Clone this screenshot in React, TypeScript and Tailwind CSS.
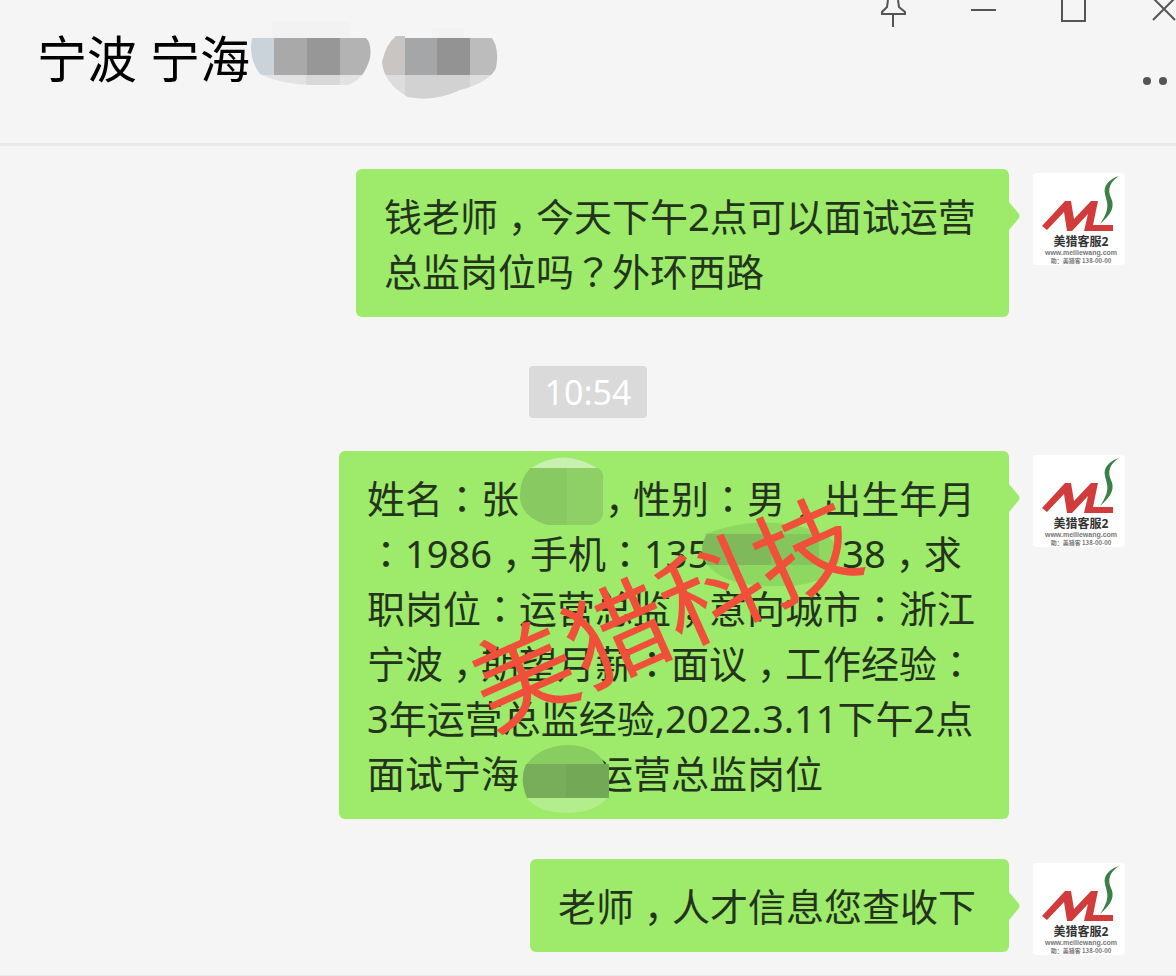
import { ReactNode } from "react";

// Full-width commas, colons and question marks sit in the middle of their cell.
function Line({ text }: { text: string }) {
    return (
        <>
            {text.split(/([，：？])/).map((part, i) => {
                if (part === "，") {
                    return (
                        <span key={i} className="pr-[9px] pl-[10px] [font-feature-settings:'halt']">
                            {part}
                        </span>
                    );
                }
                if (part === "：" || part === "？") {
                    return (
                        <span key={i} className="font-['Noto_Sans_CJK_JP',sans-serif] leading-none">
                            {part}
                        </span>
                    );
                }
                return part;
            })}
        </>
    );
}

function AvatarLogo() {
    return (
        <svg
            viewBox="0 0 92 92"
            role="img"
            aria-label="美猎客服2"
            className="mt-1 size-[92px] shrink-0 rounded-sm bg-white"
        >
            <path d="M9 53 L32 28 H38 L41 46 L58 28 H65 L60 52 H80 V58 H51 L55 41 L39 58 H34 L31 39 L14 57Z" fill="#d23b3b" />
            <path
                d="M86 3 C76 6 70 13 72 21 C74 30 78 35 67 51 C79 41 82 33 78 25 C74 16 77 9 86 3Z"
                fill="#3c8048"
            />
            <text
                x="48"
                y="73"
                textAnchor="middle"
                fontSize="12"
                fontWeight="700"
                fill="#333"
                fontFamily="Noto Sans, Noto Sans CJK SC, sans-serif"
            >
                美猎客服2
            </text>
            <text x="48" y="82" textAnchor="middle" fontSize="7" fontWeight="700" fill="#777" fontFamily="Liberation Sans, sans-serif">
                www.meiliewang.com
            </text>
            <text x="48" y="90" textAnchor="middle" fontSize="6" fontWeight="700" fill="#777" fontFamily="Noto Sans CJK SC, sans-serif">
                助：美猎客 138-00-00
            </text>
        </svg>
    );
}

function Message({ className, children }: { className: string; children: ReactNode }) {
    return (
        <article className="flex items-start justify-end gap-6 pr-[51px]">
            <div
                className={`relative rounded-md bg-[#9eea6a] pt-5 pr-4 pb-[18px] pl-7 text-[38px] leading-[55px] whitespace-nowrap text-[#24341c] [&>p]:h-[55px] ${className}`}
            >
                {children}
                <svg viewBox="0 0 12 30" className="absolute top-8 left-full h-[30px] w-3" aria-hidden="true">
                    <path d="M0 0 V1 L10 13 Q11 15 10 17 L0 29Z" fill="#9eea6a" />
                </svg>
            </div>
            <AvatarLogo />
        </article>
    );
}

function HeaderMosaic() {
    return (
        <svg viewBox="0 0 250 90" className="h-[90px] w-[250px]" aria-hidden="true">
            <defs>
                <clipPath id="blob-a">
                    <path d="M2 26 H116 Q122 32 120 46 Q114 68 98 73 H60 Q30 72 10 62 Q-2 46 2 26Z" />
                </clipPath>
                <clipPath id="blob-b">
                    <path d="M146 24 H240 Q250 34 246 56 Q240 70 210 78 Q184 90 158 85 Q134 72 132 50 Q136 32 146 24Z" />
                </clipPath>
            </defs>
            <path d="M22 10 H100 V26 H22Z M182 16 H214 V26 H182Z" fill="#f2f2f2" />
            <g clipPath="url(#blob-a)">
                <path d="M0 63 H125 V90 H0Z" fill="#e2e2e2" />
                <path d="M56 63 H90 V90 H56Z" fill="#d8d8d8" />
                <path d="M0 26 H24 V63 H0Z" fill="#cbd3da" />
                <path d="M24 26 H57 V63 H24Z" fill="#a9a9a9" />
                <path d="M57 26 H90 V63 H57Z" fill="#979797" />
                <path d="M90 26 H125 V63 H90Z" fill="#b3b3b3" />
            </g>
            <g clipPath="url(#blob-b)">
                <path d="M125 63 H250 V92 H125Z" fill="#dddddd" />
                <path d="M155 63 H220 V92 H155Z" fill="#d2d2d2" />
                <path d="M125 20 H155 V63 H125Z" fill="#c9c5c3" />
                <path d="M155 26 H187 V63 H155Z" fill="#a4a6a8" />
                <path d="M187 26 H220 V63 H187Z" fill="#939393" />
                <path d="M220 26 H250 V63 H220Z" fill="#bcbcbc" />
            </g>
        </svg>
    );
}

export default function App() {
    return (
        <div className="min-h-screen overflow-x-hidden bg-[#f5f5f5] font-['Noto_Sans','Noto_Sans_CJK_SC',sans-serif]">
            <header className="flex h-[146px] justify-between overflow-hidden border-b-3 border-[#e9e9e9]">
                <div className="flex items-start pl-[37px]">
                    <h1 className="pt-6 text-[50px] leading-[70px] whitespace-nowrap text-black">宁波 宁海</h1>
                    <div className="pt-3">
                        <HeaderMosaic />
                    </div>
                </div>

                <div className="flex shrink-0 flex-col items-end text-[#555]">
                    <div className="-mr-px flex gap-[62px]">
                        <button aria-label="置顶" className="h-7 w-7">
                            <svg viewBox="0 0 28 28" fill="none" stroke="currentColor" strokeWidth="2">
                                <path d="M9 0 L8 7 L3 12 V14 H26 V12 L20 7 L19 0 M14 14 V27" />
                            </svg>
                        </button>
                        <button aria-label="最小化" className="h-7 w-7">
                            <svg viewBox="0 0 28 28" fill="none" stroke="currentColor" strokeWidth="2">
                                <path d="M2 10 H27" />
                            </svg>
                        </button>
                        <button aria-label="最大化" className="h-7 w-7">
                            <svg viewBox="0 0 28 28" fill="none" stroke="currentColor" strokeWidth="2">
                                <path d="M3 -4 V21 H26 V-4" />
                            </svg>
                        </button>
                        <button aria-label="关闭" className="h-7 w-7">
                            <svg viewBox="0 0 28 28" fill="none" stroke="currentColor" strokeWidth="2">
                                <path d="M4 -2 L26 20 M26 -2 L4 20" />
                            </svg>
                        </button>
                    </div>
                    <button aria-label="更多" className="mt-11 h-4 w-9">
                        <svg viewBox="0 0 36 16" fill="currentColor">
                            <circle cx="7" cy="9" r="4" />
                            <circle cx="23" cy="9" r="4" />
                        </svg>
                    </button>
                </div>
            </header>

            <main className="flex flex-col border-b-3 border-[#ececec] pt-[23px] pb-5">
                <Message className="w-[653px]">
                    <p>
                        <Line text="钱老师，今天下午2点可以面试运营" />
                    </p>
                    <p>
                        <Line text="总监岗位吗？外环西路" />
                    </p>
                </Message>

                <time className="mt-[49px] mb-[33px] self-center rounded-sm bg-[#dadada] px-4 text-[34px] leading-[52px] text-white">
                    10:54
                </time>

                <Message className="w-[670px]">
                    <p>
                        <Line text="姓名：张" />
                        <span className="relative inline-block w-19">
                            <svg viewBox="0 0 86 70" className="absolute -top-14 left-0 h-[70px] w-[86px]" aria-hidden="true">
                                <path d="M12 11 Q44 -10 78 11Z" fill="#c8f0b0" />
                                <path d="M12 11 H78 Q85 14 84 24 V56 Q82 68 68 68 H28 Q2 60 1 40 Q1 20 12 11Z" fill="#88c962" />
                                <path d="M48 11 H78 Q85 14 84 24 V56 Q82 68 68 68 H48Z" fill="#8ecf66" />
                            </svg>
                        </span>
                        <Line text="，性别：男，出生年月" />
                    </p>
                    <p>
                        <Line text="：1986，手机：135" />
                        <span className="relative inline-block w-[133px]">
                            <svg viewBox="0 0 140 68" className="absolute -top-12 -left-2 h-[68px] w-[140px]" aria-hidden="true">
                                <path d="M4 14 Q60 -8 118 12 Q140 20 138 42 Q126 66 80 66 Q24 68 6 44Z" fill="#8ed862" />
                                <path d="M6 14 H70 V45 H6 Q-4 30 6 14Z" fill="#7fb95c" />
                                <path d="M70 14 H118 V45 H70Z" fill="#83c65b" />
                            </svg>
                        </span>
                        <Line text="38，求" />
                    </p>
                    <p>
                        <Line text="职岗位：运营总监，意向城市：浙江" />
                    </p>
                    <p>
                        <Line text="宁波，期望月薪：面议，工作经验：" />
                    </p>
                    <p>
                        <Line text="3年运营总监经验,2022.3.11下午2点" />
                    </p>
                    <p>
                        <Line text="面试宁海" />
                        <span className="relative inline-block w-19">
                            <svg viewBox="0 0 90 70" className="absolute -top-11 left-0.5 h-[70px] w-[90px]" aria-hidden="true">
                                <path d="M5 21 Q20 1 48 1 Q76 2 84 21Z" fill="#88cd60" />
                                <path d="M6 54 H86 Q74 69 44 69 Q16 68 6 54Z" fill="#b2ee8c" />
                                <path d="M5 20 H88 V54 H6 Q-2 36 5 20Z" fill="#78ae5a" />
                                <path d="M45 20 H88 V54 H45Z" fill="#73a956" />
                            </svg>
                        </span>
                        <Line text="运营总监岗位" />
                    </p>
                    <div className="pointer-events-none absolute inset-0 -left-5 flex items-center justify-center pb-12">
                        <span className="-rotate-24 text-[103px] leading-none font-normal text-[#f0503a]">美猎科技</span>
                    </div>
                </Message>

                <div className="mt-10">
                    <Message className="w-[479px]">
                        <p>
                            <Line text="老师，人才信息您查收下" />
                        </p>
                    </Message>
                </div>
            </main>
        </div>
    );
}
